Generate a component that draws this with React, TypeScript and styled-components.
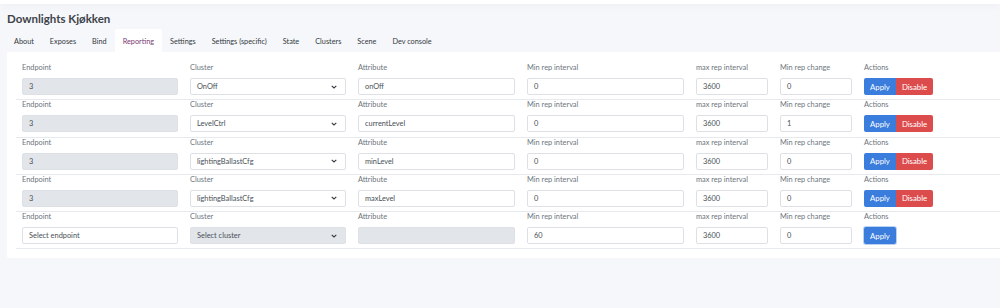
import React from 'react';
import styled, { createGlobalStyle } from 'styled-components';

const GlobalStyle = createGlobalStyle`
    html, body {
        margin: 0;
        padding: 0;
        background: #f5f7fb;
        font-family: Lato, "Noto Sans", sans-serif;
        overflow: hidden;
    }
`;

const Page = styled.div`
    width: 1000px;
    height: 308px;
    overflow: hidden;
    background: #f5f7fb;
`;

const TopBar = styled.div`
    height: 4px;
    background: #fff;
    box-shadow: 0 0 10px 0 rgba(33, 37, 41, 0.08);
`;

const Content = styled.div`
    padding: 7px 0 0 7px;
`;

const Title = styled.h1`
    margin: 0;
    font-size: 11.5px;
    line-height: 16px;
    font-weight: 700;
    color: #3e4349;
`;

const Tabs = styled.ul`
    display: flex;
    list-style: none;
    margin: 2px 0 0 -1px;
    padding: 0;
`;

const Tab = styled.li<{ $active?: boolean }>`
    height: 23px;
    padding: 0 8px;
    display: flex;
    align-items: center;
    padding-top: 2px;
    box-sizing: border-box;
    font-size: 7.3px;
    color: ${p => (p.$active ? '#7a3a73' : '#343a40')};
    background: ${p => (p.$active ? '#fff' : 'transparent')};
    border-radius: 2px 2px 0 0;
`;

const Card = styled.div`
    background: #fff;
    margin-right: -30px;
    padding: 11px 0 9px 9px;
    border-radius: 2px;
`;

const Row = styled.div`
    display: grid;
    grid-template-columns: 156px 156px 157px 157px 72px 72px 140px;
    column-gap: 12px;
    padding: 0 0 4.25px 6px;
    border-bottom: 1px solid #e6e9ee;
`;

const Field = styled.div`
    display: flex;
    flex-direction: column;
`;

const Label = styled.label`
    font-size: 7.4px;
    line-height: 10px;
    height: 10px;
    margin-bottom: 5px;
    color: #6c757d;
`;

const Input = styled.div<{ $disabled?: boolean }>`
    height: 17px;
    box-sizing: border-box;
    border: 1px solid #dde1e6;
    border-radius: 2px;
    background: ${p => (p.$disabled ? '#e2e6eb' : '#fff')};
    display: flex;
    align-items: center;
    justify-content: space-between;
    padding: 0 8px 0 6px;
    font-size: 7.4px;
    color: #495057;
`;

const Chevron = () => (
    <svg width="6" height="4" viewBox="0 0 6 4">
        <path d="M0.7 0.8 L3 3 L5.3 0.8" fill="none" stroke="#343a40" strokeWidth="1.1" />
    </svg>
);

const ButtonGroup = styled.div`
    display: flex;
`;

const Button = styled.button<{ $variant: 'primary' | 'danger'; $focus?: boolean }>`
    height: 17px;
    border: none;
    margin: 0;
    padding: 0 6px;
    font-family: inherit;
    font-size: 7.8px;
    color: #fff;
    background: ${p => (p.$variant === 'primary' ? '#3b7ddd' : '#dc4c4c')};
    border-radius: 0;
    box-shadow: ${p => (p.$focus ? '0 0 0 1px rgba(59, 125, 221, 0.35)' : 'none')};
    &:first-child {
        border-radius: 2px 0 0 2px;
    }
    &:last-child {
        border-radius: 0 2px 2px 0;
    }
    &:only-child {
        border-radius: 2px;
    }
`;

type Rule = {
    endpoint: string;
    cluster: string;
    attribute: string;
    minInterval: string;
    maxInterval: string;
    minChange: string;
    isNew?: boolean;
};

const rules: Rule[] = [
    { endpoint: '3', cluster: 'OnOff', attribute: 'onOff', minInterval: '0', maxInterval: '3600', minChange: '0' },
    { endpoint: '3', cluster: 'LevelCtrl', attribute: 'currentLevel', minInterval: '0', maxInterval: '3600', minChange: '1' },
    { endpoint: '3', cluster: 'lightingBallastCfg', attribute: 'minLevel', minInterval: '0', maxInterval: '3600', minChange: '0' },
    { endpoint: '3', cluster: 'lightingBallastCfg', attribute: 'maxLevel', minInterval: '0', maxInterval: '3600', minChange: '0' },
    { endpoint: 'Select endpoint', cluster: 'Select cluster', attribute: '', minInterval: '60', maxInterval: '3600', minChange: '0', isNew: true },
];

const tabs = ['About', 'Exposes', 'Bind', 'Reporting', 'Settings', 'Settings (specific)', 'State', 'Clusters', 'Scene', 'Dev console'];

function ReportingRow({ rule }: { rule: Rule }) {
    return (
        <Row>
            <Field>
                <Label>Endpoint</Label>
                <Input $disabled={!rule.isNew}>{rule.endpoint}</Input>
            </Field>
            <Field>
                <Label>Cluster</Label>
                <Input $disabled={rule.isNew}>
                    {rule.cluster}
                    <Chevron />
                </Input>
            </Field>
            <Field>
                <Label>Attribute</Label>
                <Input $disabled={rule.isNew}>{rule.attribute}</Input>
            </Field>
            <Field>
                <Label>Min rep interval</Label>
                <Input>{rule.minInterval}</Input>
            </Field>
            <Field>
                <Label>max rep interval</Label>
                <Input>{rule.maxInterval}</Input>
            </Field>
            <Field>
                <Label>Min rep change</Label>
                <Input>{rule.minChange}</Input>
            </Field>
            <Field>
                <Label>Actions</Label>
                <ButtonGroup>
                    <Button $variant="primary" $focus={rule.isNew}>Apply</Button>
                    {!rule.isNew && <Button $variant="danger">Disable</Button>}
                </ButtonGroup>
            </Field>
        </Row>
    );
}

export default function App() {
    return (
        <Page>
            <GlobalStyle />
            <TopBar />
            <Content>
                <Title>Downlights Kjøkken</Title>
                <Tabs>
                    {tabs.map(t => (
                        <Tab key={t} $active={t === 'Reporting'}>{t}</Tab>
                    ))}
                </Tabs>
                <Card>
                    {rules.map((r, i) => (
                        <ReportingRow key={i} rule={r} />
                    ))}
                </Card>
            </Content>
        </Page>
    );
}
